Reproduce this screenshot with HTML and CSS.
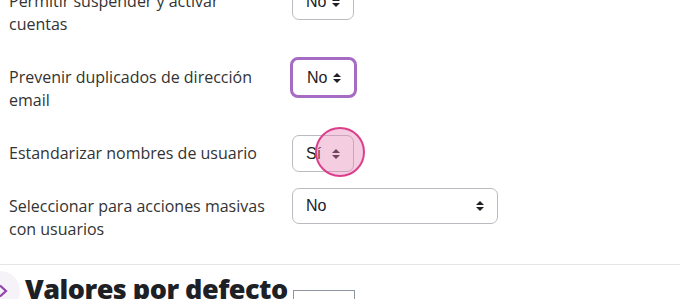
FILE: index.html
```html
<!DOCTYPE html>
<html lang="es">
<head>
    <meta charset="utf-8">
    <title>Administración de usuarios</title>
    <link rel="stylesheet" href="styles.css">
</head>
<body>
    <div class="settings">
        <div class="row">
            <label class="row-label">Permitir suspender y activar cuentas</label>
            <div class="select select-small">
                <span>No</span>
                <svg class="caret" width="8" height="12" viewBox="0 0 8 12"><path d="M0 5 L4 1 L8 5 Z M0 7 L4 11 L8 7 Z" fill="#1d2125"/></svg>
            </div>
        </div>

        <div class="row">
            <label class="row-label">Prevenir duplicados de dirección email</label>
            <div class="select select-small is-focused">
                <span>No</span>
                <svg class="caret" width="8" height="12" viewBox="0 0 8 12"><path d="M0 5 L4 1 L8 5 Z M0 7 L4 11 L8 7 Z" fill="#1d2125"/></svg>
            </div>
        </div>

        <div class="row">
            <label class="row-label">Estandarizar nombres de usuario</label>
            <div class="select select-small">
                <span>Sí</span>
                <svg class="caret" width="8" height="12" viewBox="0 0 8 12"><path d="M0 5 L4 1 L8 5 Z M0 7 L4 11 L8 7 Z" fill="#1d2125"/></svg>
                <div class="touch"></div>
            </div>
        </div>

        <div class="row">
            <label class="row-label">Seleccionar para acciones masivas con usuarios</label>
            <div class="select select-wide">
                <span>No</span>
                <svg class="caret" width="8" height="12" viewBox="0 0 8 12"><path d="M0 5 L4 1 L8 5 Z M0 7 L4 11 L8 7 Z" fill="#1d2125"/></svg>
            </div>
        </div>
    </div>

    <div class="section">
        <div class="toggle">
            <svg width="10" height="14" viewBox="0 0 10 14"><path d="M1 1.5 L7 7 L1 12.5" fill="none" stroke="#8e44ad" stroke-width="2.2"/></svg>
        </div>
        <h2 class="section-title">Valores por defecto</h2>
        <div class="section-box"></div>
    </div>
</body>
</html>
```

FILE: styles.css
```css
body {
    margin: 0;
    background: #fff;
    color: #1d2125;
    font-family: "Open Sans", sans-serif;
    overflow: hidden;
}

.settings {
    margin-top: -17px;
    padding-left: 9px;
}

.row {
    display: grid;
    grid-template-columns: 283px auto;
    align-items: start;
    margin-bottom: 16px;
}

.row-label {
    padding: 7px 20px 7px 0;
    font-size: 16px;
    line-height: 23px;
    color: #333;
}

.select {
    position: relative;
    display: flex;
    align-items: center;
    justify-content: space-between;
    height: 37px;
    box-sizing: border-box;
    padding: 0 13px;
    border: 1px solid #b9bcc0;
    border-radius: 7px;
    font-family: "Liberation Sans", Arial, sans-serif;
    font-size: 16px;
    color: #1d2125;
    background: #fff;
}

.select-small {
    width: 62px;
}

.select-wide {
    width: 206px;
    height: 36px;
}

.select .caret {
    flex: none;
}

.is-focused {
    border: 3px solid #a66cc4;
    border-radius: 8px;
    width: 67px;
    height: 41px;
    margin: -2px 0 0 -2px;
    padding: 0 13px 0 14px;
}

.touch {
    position: absolute;
    left: 22px;
    top: -9px;
    width: 50px;
    height: 50px;
    border-radius: 50%;
    box-sizing: border-box;
    border: 2px solid #db3f8c;
    background: rgba(230, 130, 180, 0.4);
}

.section {
    display: flex;
    align-items: flex-start;
    border-top: 1px solid #e3e5e8;
    padding-top: 4px;
}

.toggle {
    flex: none;
    width: 40px;
    height: 40px;
    margin-left: -20px;
    border-radius: 50%;
    background: #f5f3f7;
    display: flex;
    align-items: center;
    justify-content: flex-end;
    padding-right: 11px;
    box-sizing: border-box;
    margin-top: 2px;
}

.section-title {
    margin: 0 0 0 5px;
    font-family: "Open Sans", sans-serif;
    font-weight: 800;
    font-size: 27px;
    letter-spacing: -0.5px;
    line-height: 40px;
    color: #1d2125;
}

.section-box {
    width: 62px;
    height: 30px;
    margin: 21px 0 0 5px;
    border: 1px solid #8f959e;
    box-sizing: border-box;
}
```
